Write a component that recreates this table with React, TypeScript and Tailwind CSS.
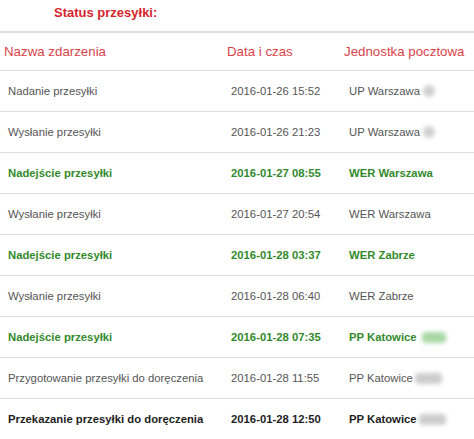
import React from "react";

type Row = {
  name: string;
  date: string;
  unit: string;
  kind: "normal" | "green" | "bold";
  blur?: "small" | "green" | "gray" | "none";
};

const rows: Row[] = [
  { name: "Nadanie przesyłki", date: "2016-01-26 15:52", unit: "UP Warszawa", kind: "normal", blur: "small" },
  { name: "Wysłanie przesyłki", date: "2016-01-26 21:23", unit: "UP Warszawa", kind: "normal", blur: "small" },
  { name: "Nadejście przesyłki", date: "2016-01-27 08:55", unit: "WER Warszawa", kind: "green" },
  { name: "Wysłanie przesyłki", date: "2016-01-27 20:54", unit: "WER Warszawa", kind: "normal" },
  { name: "Nadejście przesyłki", date: "2016-01-28 03:37", unit: "WER Zabrze", kind: "green" },
  { name: "Wysłanie przesyłki", date: "2016-01-28 06:40", unit: "WER Zabrze", kind: "normal" },
  { name: "Nadejście przesyłki", date: "2016-01-28 07:35", unit: "PP Katowice", kind: "green", blur: "green" },
  { name: "Przygotowanie przesyłki do doręczenia", date: "2016-01-28 11:55", unit: "PP Katowice", kind: "normal", blur: "gray" },
  { name: "Przekazanie przesyłki do doręczenia", date: "2016-01-28 12:50", unit: "PP Katowice", kind: "bold", blur: "gray" },
];

function Blur({ type }: { type?: Row["blur"] }) {
  if (!type || type === "none") return null;
  if (type === "small")
    return <span className="ml-[3px] inline-block h-[12px] w-[12px] rounded-full bg-[#cfcfcf] blur-[2px]" />;
  if (type === "green")
    return <span className="ml-[5px] inline-block h-[11px] w-[24px] rounded-sm bg-[#a9d8a4] blur-[2px]" />;
  return <span className="ml-[2px] inline-block h-[11px] w-[27px] rounded-sm bg-[#cdcdcd] blur-[2px]" />;
}

export default function App() {
  return (
    <div className="w-[474px] h-[439px] overflow-hidden bg-white" style={{ fontFamily: '"Liberation Sans", Arial, sans-serif' }}>
      <div className="h-[31px] pt-[5px] pl-[54px] text-[13px] leading-[16px] font-bold text-[#d6252d]">
        Status przesyłki:
      </div>
      <div className="border-t-2 border-[#dcdcdc]">
        <div className="grid grid-cols-[223px_117px_1fr] h-[38px] items-center border-b border-[#dcdcdc] text-[13.3px] text-[#d9434a]">
          <div className="pl-[4px]">Nazwa zdarzenia</div>
          <div className="pl-[4px]">Data i czas</div>
          <div className="pl-[4px] whitespace-nowrap">Jednostka pocztowa</div>
        </div>
        {rows.map((r, i) => {
          const color =
            r.kind === "green"
              ? "text-[#338a2c] font-bold"
              : r.kind === "bold"
              ? "text-[#1e1e1e] font-bold"
              : "text-[#555555]";
          return (
            <div
              key={i}
              className={`grid grid-cols-[223px_117px_1fr] h-[41px] items-center border-b border-[#dcdcdc] text-[11.3px] ${color}`}
            >
              <div className="pl-[8px] whitespace-nowrap">{r.name}</div>
              <div className="pl-[8px] whitespace-nowrap">{r.date}</div>
              <div className="pl-[9px] whitespace-nowrap flex items-center">
                <span>{r.unit}</span>
                <Blur type={r.blur} />
              </div>
            </div>
          );
        })}
      </div>
    </div>
  );
}
